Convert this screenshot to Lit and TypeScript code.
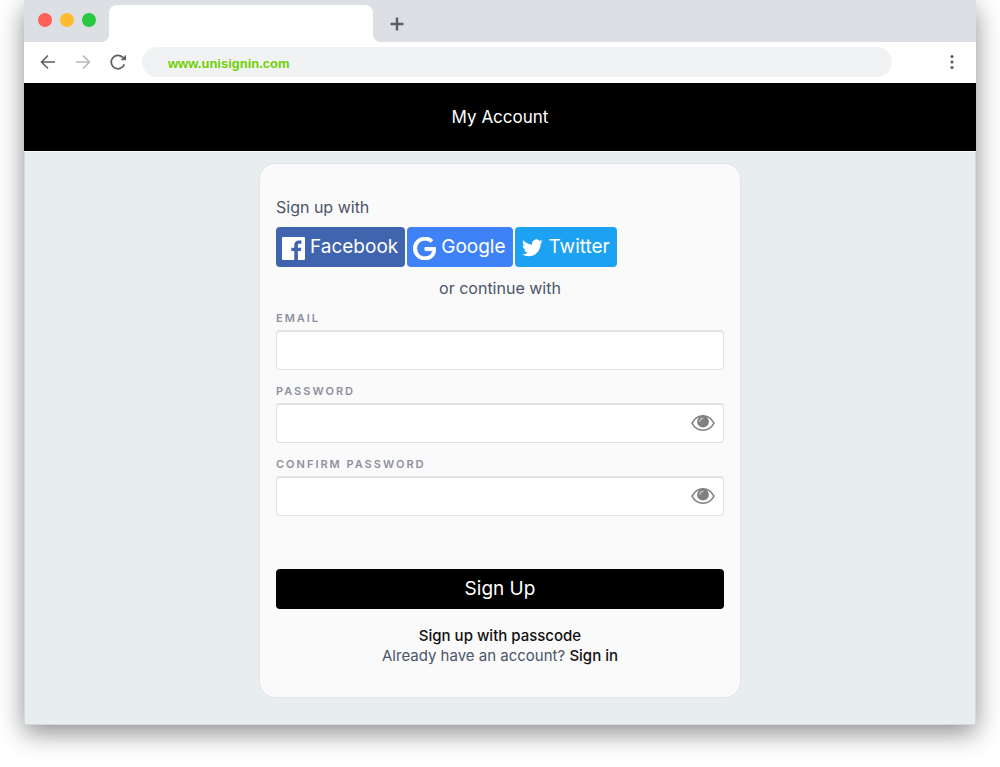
import { LitElement, html, css, svg } from "lit";
import { customElement, property, state } from "lit/decorators.js";

const icons = {
  facebook: svg`<path fill="currentColor" d="M22.7 0H1.3C.6 0 0 .6 0 1.3v21.4c0 .7.6 1.3 1.3 1.3h11.5v-9.3H9.7v-3.6h3.1V8.4c0-3.1 1.9-4.8 4.7-4.8 1.3 0 2.5.1 2.8.1V7h-1.900c-1.500 0-1.800.7-1.800 1.800v2.300h3.600l-.5 3.600h-3.100V24h6.100c.7 0 1.300-.6 1.300-1.300V1.300C24 .6 23.400 0 22.700 0z"/>`,
  google: svg`<path fill="currentColor" d="M12.48 10.92v3.28h7.84c-.24 1.84-.853 3.187-1.787 4.133-1.147 1.147-2.933 2.4-6.053 2.4-4.827 0-8.6-3.893-8.6-8.72s3.773-8.72 8.6-8.72c2.600 0 4.507 1.027 5.907 2.347l2.307-2.307C18.747 1.440 16.133 0 12.480 0 5.867 0 .307 5.387.307 12s5.560 12 12.173 12c3.573 0 6.267-1.173 8.373-3.360 2.160-2.160 2.840-5.213 2.840-7.667 0-.760-.053-1.467-.173-2.053H12.480z" stroke="currentColor" stroke-width=".9"/>`,
  twitter: svg`<path fill="currentColor" transform="translate(1 .500) scale(.9)" d="M23.953 4.570a10 10 0 0 1-2.825.775 4.958 4.958 0 0 0 2.163-2.723c-.951.555-2.005.959-3.127 1.184a4.920 4.920 0 0 0-8.384 4.482C7.690 8.095 4.067 6.130 1.640 3.162a4.822 4.822 0 0 0-.666 2.475c0 1.710.870 3.213 2.188 4.096a4.904 4.904 0 0 1-2.228-.616v.060a4.923 4.923 0 0 0 3.946 4.827 4.996 4.996 0 0 1-2.212.085 4.936 4.936 0 0 0 4.604 3.417 9.867 9.867 0 0 1-6.102 2.105c-.390 0-.779-.023-1.170-.067a13.995 13.995 0 0 0 7.557 2.209c9.053 0 13.998-7.496 13.998-13.985 0-.210 0-.420-.015-.630A9.935 9.935 0 0 0 24 4.590z"/>`,
};

type Provider = { id: keyof typeof icons; label: string };

const providers: Provider[] = [
  { id: "facebook", label: "Facebook" },
  { id: "google", label: "Google" },
  { id: "twitter", label: "Twitter" },
];

@customElement("browser-bar")
class BrowserBar extends LitElement {
  @property() address = "";

  static styles = css`
    :host { display: block; font-family: "Liberation Sans", Arial, sans-serif; }
    button { display: grid; place-items: center; padding: 0; border: 0; background: none; color: #5b5f63; }
    svg { display: block; }
    .tabs { display: flex; height: 42px; background: #dce0e5; padding-left: 14px; }
    .lights { display: flex; gap: 8px; padding-top: 13px; }
    .light { width: 14px; height: 14px; border-radius: 50%; }
    .close { background: #ff5f57; }
    .minimize { background: #febc2e; }
    .zoom { background: #28c840; }
    .tab {
      position: relative; width: 264px; margin: 5px 12px 0 13px;
      background: #fff; border-radius: 8px 8px 0 0;
    }
    .tab::before, .tab::after {
      content: ""; position: absolute; bottom: 0; width: 8px; height: 8px;
    }
    .tab::before { right: 100%; background: radial-gradient(circle at 0 0, transparent 8px, #fff 8px); }
    .tab::after { left: 100%; background: radial-gradient(circle at 100% 0, transparent 8px, #fff 8px); }
    .new { width: 24px; margin-top: 5px; }
    .toolbar { display: flex; align-items: center; height: 41px; padding: 0 14px 1px; background: #fff; box-sizing: border-box; }
    .nav { display: flex; gap: 15px; margin-right: 14px; }
    .nav button { width: 20px; height: 20px; }
    .nav .forward { color: #b6b8ba; }
    .address {
      flex: 0 1 750px; min-width: 0; height: 30px; box-sizing: border-box; border: 0;
      border-radius: 15px; padding: 2px 26px 0; background: #f0f2f4;
      color: #70d000; font: bold 13px "Liberation Sans", Arial, sans-serif;
    }
    .menu { margin-left: auto; width: 20px; height: 20px; }
  `;

  render() {
    return html`
      <div class="tabs">
        <div class="lights">
          <span class="light close"></span><span class="light minimize"></span><span class="light zoom"></span>
        </div>
        <div class="tab"></div>
        <button class="new" aria-label="New tab">
          <svg width="14" height="14" viewBox="0 0 14 14" stroke="currentColor" stroke-width="2.400"><path d="M7 .5v13M.5 7h13" /></svg>
        </button>
      </div>
      <div class="toolbar">
        <div class="nav">
          <button aria-label="Back">
            <svg width="16" height="16" viewBox="0 0 16 16" fill="none" stroke="currentColor" stroke-width="1.600"><path d="M15 8H2M8 1.500 1.500 8 8 14.500" /></svg>
          </button>
          <button class="forward" aria-label="Forward">
            <svg width="16" height="16" viewBox="0 0 16 16" fill="none" stroke="currentColor" stroke-width="1.600"><path d="M1 8H14M8 1.500 14.500 8 8 14.500" /></svg>
          </button>
          <button aria-label="Reload">
            <svg width="18" height="18" viewBox="0 0 18 18" fill="none" stroke="currentColor" stroke-width="1.700"><path d="M15.300 11.200A6.700 6.700 0 1 1 13.500 4.200L15 5.700" /><path d="M17 1.800v5.400h-5.400z" fill="currentColor" stroke="none" /></svg>
          </button>
        </div>
        <input class="address" aria-label="Address" .value=${this.address} />
        <button class="menu" aria-label="Menu">
          <svg width="4" height="16" viewBox="0 0 4 16" fill="currentColor"><circle cx="2" cy="2.500" r="1.600" /><circle cx="2" cy="8" r="1.600" /><circle cx="2" cy="13.500" r="1.600" /></svg>
        </button>
      </div>
    `;
  }
}

@customElement("form-field")
class FormField extends LitElement {
  @property() label = "";
  @property() type = "text";
  @state() private revealed = false;

  static styles = css`
    :host { display: grid; gap: 4px; }
    label { font-size: 11px; line-height: 16px; font-weight: 600; letter-spacing: 2px; text-transform: uppercase; color: #8d919d; }
    .box {
      display: flex; align-items: center; height: 40px; box-sizing: border-box;
      background: #fff; border: 1px solid #e2e2e2; border-top: 2px solid #e2e2e2; border-radius: 4px;
    }
    input { flex: 1; min-width: 0; height: 100%; box-sizing: border-box; border: 0; outline: 0; background: none; padding: 0 12px; font: inherit; }
    button { display: grid; place-items: center; padding: 0 8px 2px; border: 0; background: none; color: #808080; }
  `;

  render() {
    const secret = this.type === "password";
    return html`
      <label for="field">${this.label}</label>
      <div class="box">
        <input id="field" type=${secret && this.revealed ? "text" : this.type} />
        ${secret
          ? html`<button type="button" aria-label="Show password" @click=${() => (this.revealed = !this.revealed)}>
              <svg width="24" height="18" viewBox="0 0 24 18">
                <path d="M1 9.200C3.500 4.300 7.300 1.700 12 1.700s8.500 2.600 11 7.500c-2.500 4.600-6.300 7.100-11 7.100S3.500 13.800 1 9.200z" fill="#fff" stroke="currentColor" stroke-width="1.500" />
                <circle cx="12" cy="7.700" r="5.900" fill="currentColor" />
                <path d="M8.800 7.500A3.300 3.300 0 0 1 12 4.300" fill="none" stroke="#c4c4c4" stroke-width="1.200" stroke-linecap="round" />
              </svg>
            </button>`
          : ""}
      </div>
    `;
  }
}

@customElement("app-root")
class AppRoot extends LitElement {
  static styles = css`
    :host { display: block; background: #fff; overflow: hidden; padding: 0 24px 42px; font-family: Inter, "Open Sans", sans-serif; color: #4a5568; }
    .window { box-shadow: 0 8px 24px rgba(0, 0, 0, 0.45); background: #e8edf0; }
    .title {
      margin: 0; display: grid; place-items: center; height: 68px; background: #000; color: #fff;
      font-size: 17px; line-height: 20px; font-weight: 400; border-bottom: 1px solid #f8fafb;
    }
    .page { padding: 11px 16px 26px; border: 1px solid #d3d8dc; border-top: 0; }
    .card {
      box-sizing: border-box; max-width: 482px; margin: 0 auto; padding: 33px 16px 31px;
      background: #fafafa; border: 1px solid #e2e4e6; border-radius: 16px;
      font-size: 15px; line-height: 20px;
    }
    p { margin: 0; }
    .lead { font-size: 16px; }
    .providers { display: flex; flex-wrap: wrap; gap: 2px; margin: 10px 0 11px; }
    .provider {
      display: flex; align-items: center; gap: 5px; height: 40px; padding: 0 7px 0 6px; border: 0; border-radius: 4px;
      color: #fff; font: 400 19px/24px Inter, "Open Sans", sans-serif;
    }
    .provider svg { width: 23px; height: 23px; margin-top: 3px; }
    .facebook { background: #4064ad; }
    .google { background: #3f82f8; }
    .twitter { background: #1da1f2; }
    .center { text-align: center; }
    .fields { display: grid; gap: 13px; margin: 12px 0 53px; }
    .submit {
      display: block; width: 100%; height: 40px; border: 0; border-radius: 4px; background: #000; color: #fff;
      font: 400 19px/24px Inter, "Open Sans", sans-serif;
    }
    .links { margin-top: 17px; text-align: center; }
    a { color: #111; text-decoration: none; font-weight: 500; }
  `;

  render() {
    return html`
      <div class="window">
        <browser-bar address="www.unisignin.com"></browser-bar>
        <h1 class="title">My Account</h1>
        <main class="page">
          <form class="card" @submit=${(e: Event) => e.preventDefault()}>
            <p class="lead">Sign up with</p>
            <div class="providers">
              ${providers.map(
                (p) => html`<button type="button" class="provider ${p.id}">
                  <svg viewBox="0 0 24 24" aria-hidden="true">${icons[p.id]}</svg>${p.label}
                </button>`
              )}
            </div>
            <p class="lead center">or continue with</p>
            <div class="fields">
              <form-field label="Email" type="email"></form-field>
              <form-field label="Password" type="password"></form-field>
              <form-field label="Confirm password" type="password"></form-field>
            </div>
            <button class="submit">Sign Up</button>
            <div class="links">
              <p><a href="#passcode">Sign up with passcode</a></p>
              <p>Already have an account? <a href="#signin">Sign in</a></p>
            </div>
          </form>
        </main>
      </div>
    `;
  }
}
